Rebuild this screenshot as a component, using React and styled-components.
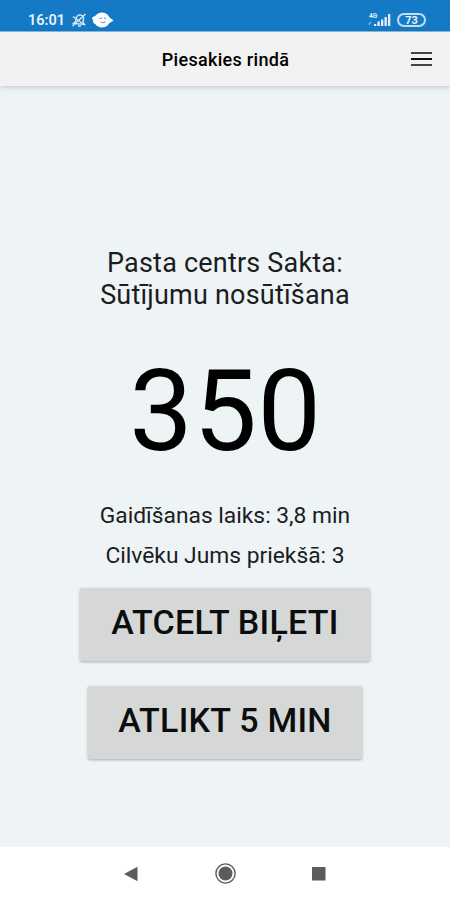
import styled, { createGlobalStyle } from 'styled-components'

export default function App() {
    return (
        <>
            <GlobalStyle/>
            <Screen>
                <StatusBar>
                    <StatusGroup>
                        <Clock>16:01</Clock>
                        <MutedBell/>
                        <FaceBadge/>
                    </StatusGroup>
                    <StatusGroup>
                        <Signal/>
                        <Battery>73</Battery>
                    </StatusGroup>
                </StatusBar>
                <Header>
                    <Title>Piesakies rindā</Title>
                    <MenuButton aria-label="Izvēlne">
                        <span/>
                        <span/>
                        <span/>
                    </MenuButton>
                </Header>
                <Ticket>
                    <Place>Pasta centrs Sakta:<br/>Sūtījumu nosūtīšana</Place>
                    <Number>350</Number>
                    <Info>Gaidīšanas laiks: 3,8 min</Info>
                    <Info>Cilvēku Jums priekšā: 3</Info>
                    <Button $width="290px">ATCELT BIĻETI</Button>
                    <Button $width="274px">ATLIKT 5 MIN</Button>
                </Ticket>
                <NavBar>
                    <svg width="15" height="16" viewBox="0 0 15 16"><path d="M0 8L13.5 0.8V15.2Z" fill="#5c5c5c"/></svg>
                    <svg width="22" height="22" viewBox="0 0 22 22">
                        <circle cx="10.5" cy="10.5" r="9.6" fill="none" stroke="#5c5c5c" strokeWidth="1.4"/>
                        <circle cx="10.5" cy="10.5" r="7" fill="#5c5c5c"/>
                    </svg>
                    <svg width="14" height="14" viewBox="0 0 14 14"><rect width="13.5" height="13.5" fill="#5c5c5c"/></svg>
                </NavBar>
            </Screen>
        </>
    )
};

function MutedBell() {
    return (
        <svg width="16" height="16" viewBox="0 0 16 16" fill="none" stroke="#d5e8f7" strokeWidth="1.4">
            <path d="M2.5 11.5L4.5 9.5L5.5 5.5C6 3.5 8 2.5 10 3.2S13 6 12.3 8L12 10.5L13.5 12.5Z"/>
            <path d="M7 14H10M1.5 14L14.5 2M2 4.5L13.5 13"/>
        </svg>
    )
}

function FaceBadge() {
    return (
        <svg width="22" height="16" viewBox="0 0 22 16">
            <ellipse cx="10" cy="8" rx="8" ry="7.6" fill="#fff"/>
            <path d="M0 5.5L4 3.5V12.5L1.5 11ZM21.5 8.5L16 4.5V12Z" fill="#fff"/>
            <path d="M7.5 6.7L10 6.2M12 6.2L14 6.7M8.5 10Q11 11.5 13.5 9.8" fill="none" stroke="#6fa9d8" strokeWidth="1.2"/>
        </svg>
    )
}

function Signal() {
    return (
        <svg width="24" height="16" viewBox="0 0 24 16" fill="#e3f0fa">
            <text x="1" y="6" fontSize="6.5" fontWeight="700">4G</text>
            <path d="M0 12.5L3.5 8.5L2 12.5Z" opacity="0.6"/>
            <rect x="6" y="12" width="2.3" height="2"/>
            <rect x="9.5" y="9.5" width="2.3" height="4.5"/>
            <rect x="13" y="7.5" width="2.3" height="6.5"/>
            <rect x="16.5" y="5" width="2.3" height="9"/>
            <rect x="20" y="2" width="2.3" height="12"/>
        </svg>
    )
}

const GlobalStyle = createGlobalStyle`
    * {
        box-sizing: border-box;
    }
    body {
        margin: 0;
        font-family: Roboto, sans-serif;
        color: #1B1D1E;
    }
`

const Screen = styled.div`
    width: 450px;
    height: 900px;
    display: flex;
    flex-direction: column;
    background-color: #EEF3F6;
    overflow: hidden;
`

const StatusBar = styled.div`
    height: 32px;
    flex-shrink: 0;
    display: flex;
    justify-content: space-between;
    padding: 8px 24px 0 28px;
    background-color: #157AC5;
    border-bottom: 1px solid #8FBFE3;
`

const StatusGroup = styled.div`
    height: 24px;
    display: flex;
    align-items: center;
    gap: 5px;
    svg {
        margin-top: -1px;
    }
`

const Clock = styled.span`
    font-size: 14.5px;
    font-weight: 600;
    line-height: 24px;
    padding-top: 1px;
    margin-right: 1px;
    color: #E9F4FC;
`

const Battery = styled.div`
    width: 29px;
    height: 14px;
    border: 2px solid #C3DDF2;
    border-radius: 7px;
    font-size: 11px;
    font-weight: 700;
    line-height: 11px;
    text-align: center;
    color: #E9F4FC;
`

const Header = styled.div`
    height: 54px;
    flex-shrink: 0;
    display: flex;
    align-items: center;
    justify-content: flex-end;
    padding-right: 18px;
    background-color: #F2F2F2;
    box-shadow: 0 1px 5px rgba(0, 0, 0, 0.2);
`

const Title = styled.h1`
    flex: 1;
    margin: 0 0 0 40px;
    font-size: 18px;
    font-weight: 500;
    letter-spacing: 0.3px;
    text-align: center;
    white-space: nowrap;
    color: #000000;
`

const MenuButton = styled.div`
    width: 21px;
    display: flex;
    flex-direction: column;
    gap: 4px;
    span {
        height: 2px;
        background-color: #444444;
    }
    span:nth-child(2) {
        background-color: #111111;
    }
`

const Ticket = styled.div`
    flex: 1;
    display: flex;
    flex-direction: column;
    align-items: center;
    padding-top: 161px;
`

const Place = styled.div`
    font-size: 27px;
    line-height: 32px;
    letter-spacing: 0.2px;
    text-align: center;
`

const Number = styled.div`
    margin: 35px 0 18px;
    padding-left: 1px;
    font-size: 113px;
    line-height: 132px;
    letter-spacing: 0.6px;
    color: #000000;
`

const Info = styled.div`
    font-size: 22.8px;
    line-height: 40px;
`

const Button = styled.button`
    width: ${props => props.$width};
    height: 73px;
    margin: 12px 0 13px;
    padding: 0 0 5px;
    border: none;
    border-radius: 2px;
    background-color: #D6D8D7;
    box-shadow: 0 1px 3px rgba(0, 0, 0, 0.3);
    font-family: inherit;
    font-size: 34px;
    font-weight: 500;
    letter-spacing: 0.25px;
    color: #0C0D0D;

    & + & {
        margin-top: 12px;
    }
`

const NavBar = styled.div`
    height: 53px;
    flex-shrink: 0;
    display: flex;
    align-items: center;
    justify-content: space-between;
    padding: 0 124px 0 124px;
    background-color: #FFFFFF;
`
